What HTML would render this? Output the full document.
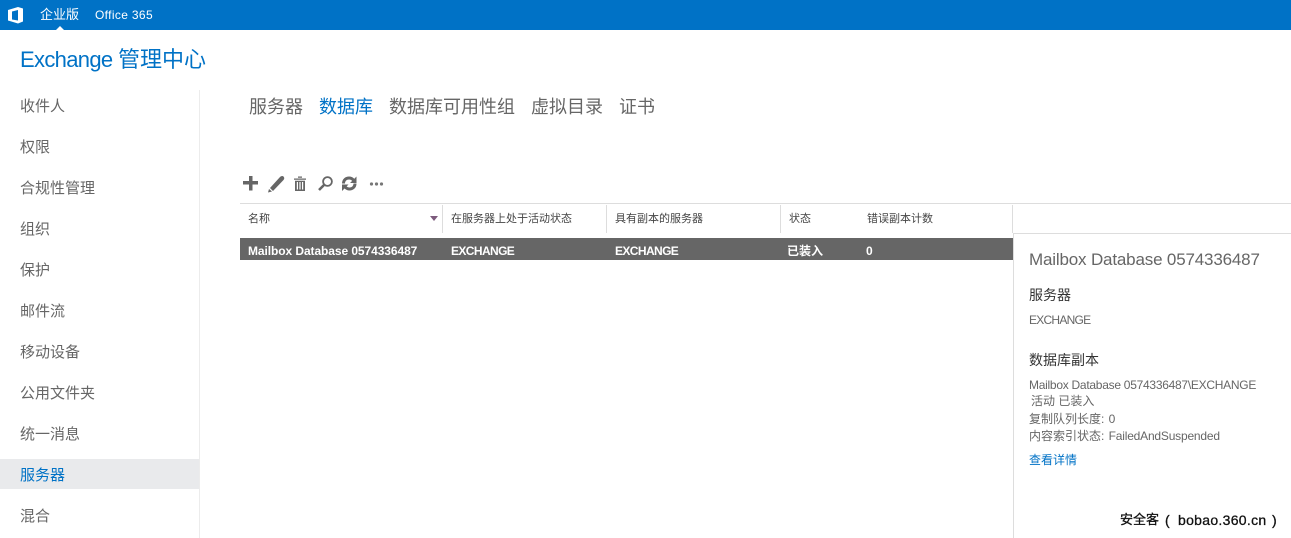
<!DOCTYPE html>
<html lang="zh-CN"><head><meta charset="utf-8"><style>
html,body{margin:0;padding:0;background:#fff;width:1291px;height:538px;overflow:hidden}
body{position:relative;font-family:"Liberation Sans","Noto Sans CJK SC",sans-serif;color:#666}
.t{position:absolute;white-space:nowrap;line-height:20px;height:20px}
.b{position:absolute}
.nav{left:20px;font-size:15px;color:#666}
.tab{top:97px;font-size:18px;color:#666}
.th{top:209px;font-size:11px;color:#444}
.td{top:241px;font-size:12px;font-weight:bold;color:#fff}
.d{left:1029px;font-size:12px;color:#666}
.sep{position:absolute;top:205px;width:1px;height:28px;background:#ddd}
.ex{letter-spacing:-.6px}
</style></head><body>
<div class="b" style="left:0;top:0;width:1291px;height:30px;background:#0072c6"></div>
<svg class="b" style="left:0;top:0" width="30" height="30" viewBox="0 0 30 30"><path fill="#fff" fill-rule="evenodd" d="M8 10 18 7 23 8.500V21.500L18 23.500 8 20.500ZM12 11.500V19.500L18 20.500V10Z"/></svg>
<div class="t" style="left:40px;top:5px;font-size:13px;color:#fff">企业版</div>
<div class="t" style="left:95px;top:5px;font-size:12px;color:#fff;letter-spacing:.35px">Office 365</div>
<svg class="b" style="left:54px;top:26px" width="12" height="4"><path d="M2 4 6 0 10 4Z" fill="#fff"/></svg>
<div class="t" style="left:20px;top:49px;font-size:22px;line-height:22px;height:22px;color:#0072c6"><span style="letter-spacing:-.67px">Exchange </span>管理中心</div>

<div class="b" style="left:199px;top:90px;width:1px;height:448px;background:#ececec"></div>
<div class="b" style="left:0;top:459px;width:199px;height:30px;background:#e9eaec"></div>
<div class="t nav" style="top:97px">收件人</div>
<div class="t nav" style="top:138px">权限</div>
<div class="t nav" style="top:179px">合规性管理</div>
<div class="t nav" style="top:220px">组织</div>
<div class="t nav" style="top:261px">保护</div>
<div class="t nav" style="top:302px">邮件流</div>
<div class="t nav" style="top:343px">移动设备</div>
<div class="t nav" style="top:384px">公用文件夹</div>
<div class="t nav" style="top:425px">统一消息</div>
<div class="t nav" style="top:466px;color:#0072c6">服务器</div>
<div class="t nav" style="top:507px">混合</div>

<div class="t tab" style="left:249px">服务器</div>
<div class="t tab" style="left:319px;color:#0072c6">数据库</div>
<div class="t tab" style="left:389px">数据库可用性组</div>
<div class="t tab" style="left:531px">虚拟目录</div>
<div class="t tab" style="left:619px">证书</div>

<svg class="b" style="left:240px;top:172px" width="150" height="22" viewBox="0 0 150 22" fill="#666">
<path d="M3 9H9V4H12.500V9H18V12.500H12.500V18.500H9V12.500H3Z"/>
<path d="M30 16 40 5C41 4 42.500 3.500 43.500 4.500 44.500 5.500 44.500 7 43.500 8L33 19Z"/><path d="M29 17 32 19.500 28 20.500Z"/>
<path d="M54 6.500H66V7.700H54ZM58 4.500H62V5.700H58Z"/><path fill-rule="evenodd" d="M55 8.700H65V19H55ZM56.800 10V17.500H58V10ZM59.400 10V17.500H60.600V10ZM62 10V17.500H63.200V10Z"/>
<circle cx="87.500" cy="9.500" r="4.400" fill="none" stroke="#666" stroke-width="1.800"/><path fill="none" stroke="#666" stroke-width="2.600" d="M84 13 79 18"/>
<path fill="none" stroke="#666" stroke-width="3" d="M103.500 11.500C103.500 8 106 6 109 6 111 6 112.500 7 113.500 8.200M115 11.500C115 15 112.500 17 109.500 17 107.500 17 106 16 105 14.800"/>
<path d="M110 11 116.500 11V4.500ZM108.500 12.500H102V19Z"/>
<g fill="#777"><circle cx="131.500" cy="12" r="1.600"/><circle cx="136.500" cy="12" r="1.600"/><circle cx="141.500" cy="12" r="1.600"/></g>
</svg>

<div class="b" style="left:240px;top:203px;width:1051px;height:1px;background:#ddd"></div>
<div class="sep" style="left:442px"></div><div class="sep" style="left:606px"></div><div class="sep" style="left:780px"></div><div class="sep" style="left:1012px"></div>
<div class="t th" style="left:248px">名称</div>
<svg class="b" style="left:430px;top:216px" width="8" height="5"><path d="M0 0H8L4 5Z" fill="#7d5b7d"/></svg>
<div class="t th" style="left:451px">在服务器上处于活动状态</div>
<div class="t th" style="left:615px">具有副本的服务器</div>
<div class="t th" style="left:789px">状态</div>
<div class="t th" style="left:867px">错误副本计数</div>

<div class="b" style="left:240px;top:238px;width:773px;height:22px;background:#666"></div>
<div class="t td" style="left:248px;letter-spacing:-.08px">Mailbox Database 0574336487</div>
<div class="t td ex" style="left:451px">EXCHANGE</div>
<div class="t td ex" style="left:615px">EXCHANGE</div>
<div class="t td" style="left:787px">已装入</div>
<div class="t td" style="left:866px">0</div>

<div class="b" style="left:1013px;top:233px;width:278px;height:1px;background:#ddd"></div>
<div class="b" style="left:1013px;top:233px;width:1px;height:305px;background:#ddd"></div>
<div class="t d" style="top:250px;font-size:17px;letter-spacing:-.17px">Mailbox Database 0574336487</div>
<div class="t d" style="top:285px;font-size:14px;color:#333">服务器</div>
<div class="t d" style="top:310px;letter-spacing:-.75px">EXCHANGE</div>
<div class="t d" style="top:350px;font-size:14px;color:#333">数据库副本</div>
<div class="t d" style="top:375px;letter-spacing:-.27px">Mailbox Database 0574336487\EXCHANGE</div>
<div class="t d" style="top:391px;left:1031px">活动 已装入</div>
<div class="t d" style="top:409px">复制队列长度: <span style="margin-left:1px">0</span></div>
<div class="t d" style="top:426px">内容索引状态: <span style="margin-left:1px;letter-spacing:-.2px">FailedAndSuspended</span></div>
<div class="t d" style="top:450px;color:#0072c6">查看详情</div>
<div class="t" style="left:1120px;top:510px;font-size:13px;color:#111;-webkit-text-stroke:.3px #111">安全客</div>
<div class="t" style="left:1165px;top:510px;font-size:14px;color:#111;-webkit-text-stroke:.3px #111">(</div>
<div class="t" style="left:1178px;top:510px;font-size:14px;color:#111;letter-spacing:.3px;-webkit-text-stroke:.3px #111">bobao.360.cn</div>
<div class="t" style="left:1272px;top:510px;font-size:14px;color:#111;-webkit-text-stroke:.3px #111">)</div>
</body></html>
